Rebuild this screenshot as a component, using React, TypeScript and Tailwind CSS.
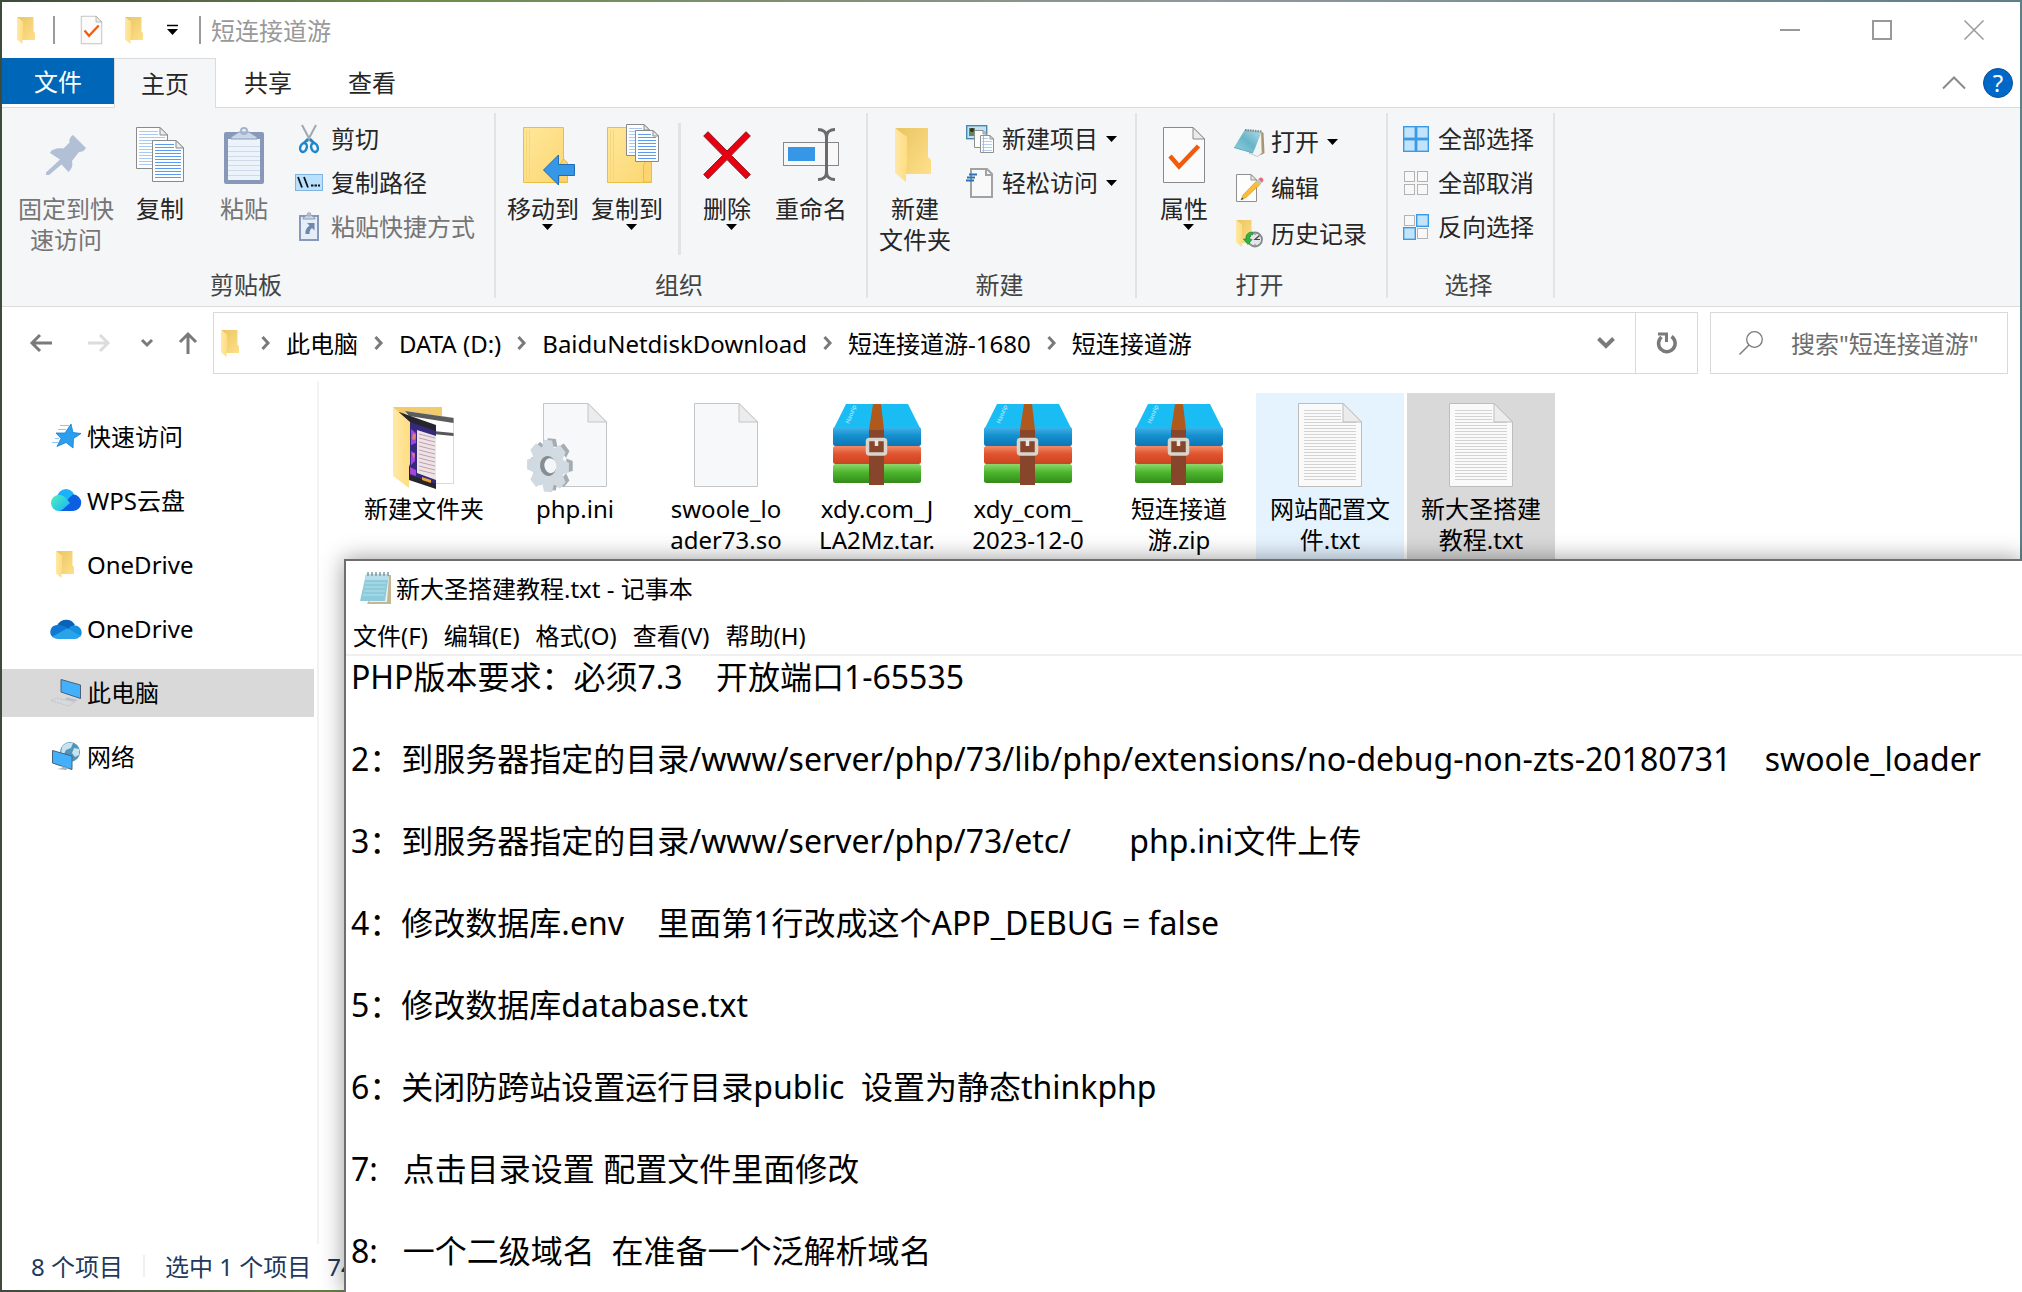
import type { ReactNode } from 'react'
import clsx from 'clsx'

/* ------------------------------------------------------------------ */
/* Small shared drawings                                               */
/* ------------------------------------------------------------------ */

interface SvgProps {
  w: number
  h: number
  vb?: string
  className?: string
  children: ReactNode
}

function Svg({ w, h, vb, className, children }: SvgProps) {
  return (
    <svg
      width={w}
      height={h}
      viewBox={vb ?? `0 0 ${w} ${h}`}
      fill="none"
      aria-hidden="true"
      className={clsx('shrink-0 overflow-visible', className)}
    >
      {children}
    </svg>
  )
}

interface PageProps {
  x?: number
  y?: number
  w: number
  h: number
  fold: number
  stroke?: string
  fill?: string
  line?: string
  step?: number
  inset?: number
  lineWidth?: number
}

// A sheet of paper with a folded top-right corner and optional ruled lines
function Page({
  x = 0,
  y = 0,
  w,
  h,
  fold,
  stroke = '#8a8a8a',
  fill = '#fdfdfd',
  line,
  step = 3,
  inset = 3,
  lineWidth = 1,
}: PageProps) {
  const rows: number[] = []
  if (line) {
    for (let r = inset + 1; r < h - inset; r += step) rows.push(r)
  }
  return (
    <g transform={`translate(${x} ${y})`}>
      <path
        d={`M.5 .5H${w - fold}L${w - 0.5} ${fold}V${h - 0.5}H.5Z`}
        fill={fill}
        stroke={stroke}
      />
      {rows.map((r) => (
        <path
          key={r}
          d={`M${inset} ${r + 0.5}H${r < fold ? w - fold - 2 : w - inset}`}
          stroke={line}
          strokeWidth={lineWidth}
        />
      ))}
      <path
        d={`M${w - fold} .5V${fold}H${w - 0.5}Z`}
        fill="#ececec"
        stroke={stroke}
      />
    </g>
  )
}

function FolderIcon({ w = 20, h = 27 }: { w?: number; h?: number }) {
  return (
    <Svg w={w} h={h} vb="0 0 20 27">
      <defs>
        <linearGradient id="folder-back" x1="0" y1="0" x2="1" y2="1">
          <stop offset="0" stopColor="#e9c562" />
          <stop offset="1" stopColor="#ffe08a" />
        </linearGradient>
        <linearGradient id="folder-leaf" x1="0" y1="0" x2="1" y2="0">
          <stop offset="0" stopColor="#ffe9a8" />
          <stop offset="1" stopColor="#ffdd80" />
        </linearGradient>
      </defs>
      <path d="M.5 0H16.5V14.5L18 16V23H4Z" fill="url(#folder-back)" />
      <path d="M0 0L6 4.500V19L5.500 20V27L0 22.500Z" fill="url(#folder-leaf)" />
    </Svg>
  )
}

function Caret({ className }: { className?: string }) {
  return (
    <Svg w={11} h={6} className={className}>
      <path d="M0 0H11L5.500 6Z" fill="#000" />
    </Svg>
  )
}

/* ------------------------------------------------------------------ */
/* Ribbon icons                                                        */
/* ------------------------------------------------------------------ */

function PinIcon() {
  return (
    <Svg w={40} h={40}>
      <path
        d="M0 37.500L14 24.500L4 18L5.500 15.500C10 13 14 13 17.500 13.500L23.500 7.500C23 4.500 24 2 27 0L40 13C38 16 36 17 33 17L26 26C27 30 26 34 22.500 37L15.500 29.500L3 40H0Z"
        fill="#b2c0d6"
      />
    </Svg>
  )
}

function CopyIcon() {
  return (
    <Svg w={48} h={56}>
      <Page w={32} h={42} fold={8} line="#a9c9f5" inset={3} />
      <Page x={16} y={13} w={32} h={42} fold={8} line="#5b9cf0" inset={3} />
    </Svg>
  )
}

function PasteIcon() {
  return (
    <Svg w={40} h={57}>
      <rect y="5" width="40" height="52" rx="2" fill="#8798b8" />
      <rect x="4" y="12" width="32" height="41" fill="#edf3fb" />
      {[19, 24, 29, 33, 38, 43, 48].map((y) => (
        <path key={y} d={`M4 ${y}.5H36`} stroke="#cfdae8" />
      ))}
      <path d="M7 10L15 5H25L33 10V12H7Z" fill="#c9d6e8" stroke="#8c9cba" />
      <circle cx="20" cy="4" r="3" stroke="#a4b3cc" strokeWidth="2" />
    </Svg>
  )
}

function ScissorsIcon() {
  return (
    <Svg w={20} h={28}>
      <path d="M3 0L12 17M17 0L8 17" stroke="#a3a8ad" strokeWidth="2" />
      <path d="M9 14L5 18M11 14L15 18" stroke="#1d86cc" strokeWidth="2.500" />
      <ellipse cx="4.500" cy="22.500" rx="3.200" ry="4.500" transform="rotate(20 4.500 22.500)" stroke="#1d86cc" strokeWidth="2.500" />
      <ellipse cx="15.500" cy="22.500" rx="3.200" ry="4.500" transform="rotate(-20 15.500 22.500)" stroke="#1d86cc" strokeWidth="2.500" />
    </Svg>
  )
}

function CopyPathIcon() {
  return (
    <Svg w={28} h={17}>
      <rect x=".5" y=".5" width="27" height="16" fill="#b9e0fc" stroke="#80b4de" />
      <path d="M3 3L7 13.500M9 3L13 13.500" stroke="#111" strokeWidth="1.800" />
      <path d="M16 11.500H18.500M19.500 11.500H22M23 11.500H25" stroke="#111" strokeWidth="2" />
    </Svg>
  )
}

function PasteShortcutIcon() {
  return (
    <Svg w={20} h={29}>
      <rect x="1" y="4" width="18" height="24" fill="#e4edf8" stroke="#8798b8" strokeWidth="2" />
      <path d="M4 6L8 3H12L16 6V7H4Z" fill="#c9d6e8" stroke="#8c9cba" />
      <circle cx="10" cy="2.500" r="1.500" stroke="#a4b3cc" strokeWidth="1.500" />
      <path d="M8 11H15.500V18.500L13 16C11 17.500 10.500 19 10.500 22H6.500C6 18.500 7.500 15.500 10.500 13.500Z" fill="#6f86ad" />
    </Svg>
  )
}

function YellowBook() {
  return (
    <>
      <defs>
        <linearGradient id="book" x1="0" y1="0" x2="1" y2="1">
          <stop offset="0" stopColor="#ffe79a" />
          <stop offset="1" stopColor="#fbd671" />
        </linearGradient>
      </defs>
      <path d="M.5 .5H40.500V32L44.500 36V55.500H.5Z" fill="url(#book)" stroke="#e8bf45" />
      <path d="M3.500 3V53M6.500 3V53" stroke="#f5d778" />
      <path d="M36.500 55V38L40.500 32L44.500 36V55Z" fill="#fdd470" stroke="#e8bf45" />
    </>
  )
}

function MoveToIcon() {
  return (
    <Svg w={40} h={56}>
      <YellowBook />
      <path d="M20.500 43L35.500 28V37.500H51.500V48.500H35.500V58Z" fill="#3697e6" stroke="#1c6cb8" />
    </Svg>
  )
}

function CopyToIcon() {
  return (
    <Svg w={40} h={56}>
      <YellowBook />
      <Page x={19} y={-3} w={24} h={32} fold={6} line="#a9c9f5" />
      <Page x={28} y={3} w={24} h={32} fold={6} line="#5b9cf0" />
    </Svg>
  )
}

function DeleteIcon() {
  return (
    <Svg w={48} h={48}>
      <path
        d="M5 .7L24 20L43 .7L47.300 5L28.300 24.300L47.300 43.500L43 47.800L24 28.600L5 47.800L.7 43.500L19.700 24.300L.7 5Z"
        fill="#e60012"
        stroke="#93151c"
      />
    </Svg>
  )
}

function RenameIcon() {
  return (
    <Svg w={56} h={54}>
      <rect x=".5" y="14.500" width="55" height="23" fill="#f8f8f9" stroke="#868686" />
      <rect x="5" y="19" width="27" height="14" fill="#3697e6" />
      <path
        d="M35 1.500C40 1.500 43.500 4 43.500 9C43.500 4 47 1.500 52 1.500M43.500 7V46M35 51.500C40 51.500 43.500 49 43.500 44C43.500 49 47 51.500 52 51.500"
        stroke="#6b6b6b"
        strokeWidth="3"
      />
    </Svg>
  )
}

function NewItemIcon() {
  return (
    <Svg w={28} h={28}>
      <rect x=".7" y=".7" width="20" height="13" fill="#bfe3f7" stroke="#4a88b0" strokeWidth="1.400" />
      <rect x="3" y="3" width="6" height="8" fill="#5e8a5c" />
      <circle cx="6" cy="5" r="2" fill="#3a2a22" />
      <Page x={8} y={5} w={13} h={18} fold={4} stroke="#909090" />
      <Page x={14} y={10} w={14} h={18} fold={4} stroke="#909090" line="#b4cdea" inset={2} />
      <path d="M17.500 11V27" stroke="#f2a0a0" />
    </Svg>
  )
}

function EasyAccessIcon() {
  return (
    <Svg w={28} h={30}>
      <path d="M5 1H21L26 6V29H5Z" fill="#f9f9f9" stroke="#a2a2a2" strokeWidth="2" />
      <path d="M20 1V7H26" stroke="#a2a2a2" strokeWidth="2" />
      <path d="M3 6.500H11M1 9.500H9M0 12.500H8" stroke="#2a72b5" strokeWidth="2" />
    </Svg>
  )
}

function PropertiesIcon({ w = 42, h = 56 }: { w?: number; h?: number }) {
  return (
    <Svg w={w} h={h} vb="0 0 42 56">
      <Page w={42} h={56} fold={12} fill="#fbfbfb" />
      <path d="M7 29L16 39.500L35.500 19" stroke="#f25b0c" strokeWidth="4.500" />
    </Svg>
  )
}

function OpenIcon() {
  return (
    <Svg w={30} h={28}>
      <defs>
        <linearGradient id="pad" x1="1" y1="0" x2="0" y2="1">
          <stop offset="0" stopColor="#b4dfe8" />
          <stop offset=".5" stopColor="#69b4c8" />
          <stop offset="1" stopColor="#8fd3e0" />
        </linearGradient>
      </defs>
      <path d="M27 3L29.500 5L30.500 25L27 27L24 26Z" fill="#a8946a" />
      <path d="M27 2.500L28 25L23.500 28.500L15 25L20 22Z" fill="#f2f4f4" stroke="#a9b4b8" strokeWidth=".7" />
      <path d="M11 1.500L27.500 3.500L19 25L0 19.500Z" fill="url(#pad)" />
      <path d="M11 2L27 3.500" stroke="#7d8a8e" strokeWidth="2.200" strokeDasharray="1.500 1" />
      <path d="M0 19.500L19 25" stroke="#4d9fb5" strokeWidth=".8" />
    </Svg>
  )
}

function EditIcon() {
  return (
    <Svg w={28} h={28}>
      <Page x={1} w={21} h={28} fold={6} stroke="#8f8f8f" />
      <path d="M6 26L8 21L22 6.500L25.500 10L11 23.500Z" fill="#fbbd36" stroke="#d99a22" strokeWidth=".7" />
      <path d="M21 7.500L23.500 5L27 8.500L24.500 11Z" fill="#b9c4cc" />
      <path d="M23.500 5L25.500 3.500C27.500 3.500 29 5.500 28 7.500L27 8.500Z" fill="#e8667a" />
      <path d="M6 26L7 23.500L8.500 25Z" fill="#444" />
    </Svg>
  )
}

function HistoryIcon() {
  return (
    <Svg w={28} h={28}>
      <path d="M1.500 0H16.500V14.500L18 16V23H5Z" fill="url(#folder-back)" />
      <path d="M1 0L7 4.500V27L1 22.500Z" fill="url(#folder-leaf)" />
      <circle cx="20" cy="19.500" r="7" fill="#e3e6e8" stroke="#868a8d" strokeWidth="1.800" />
      <path d="M24.500 15.500L20 19.500H25" stroke="#444" strokeWidth="1.200" />
      <path d="M15.500 15V17M20 13.500V15M20 24V25.500" stroke="#777" />
      <path d="M17.500 12C13 12 10.500 15 11 19H8.500L13 24.500L17 19.500L14.500 19C14.500 16.500 15.500 15 18 14.500Z" fill="#2fb344" stroke="#1b8530" strokeWidth=".7" />
    </Svg>
  )
}

function GridIcon({ on }: { on: [boolean, boolean, boolean, boolean] }) {
  return (
    <Svg w={26} h={26}>
      {on.map((active, i) => {
        const x = (i % 2) * 13
        const y = Math.floor(i / 2) * 13
        return active ? (
          <rect key={i} x={x + 0.700} y={y + 0.700} width="11.600" height="11.600" fill="#c2e3fc" stroke="#3b9ae3" strokeWidth="1.400" />
        ) : (
          <rect key={i} x={x + 1.500} y={y + 1.500} width="10" height="10" fill="#f8f8f8" stroke="#b3b3b3" />
        )
      })}
    </Svg>
  )
}

/* ------------------------------------------------------------------ */
/* Sidebar icons                                                       */
/* ------------------------------------------------------------------ */

function QuickAccessIcon() {
  return (
    <Svg w={26} h={24}>
      <path d="M18 0L20 8.500L28 9.500L20.500 14.500L20 24L13 18.500L4 22.500L8 14.500L3 9H12Z" fill="#2b9fee" stroke="#1480cf" strokeWidth=".8" />
      <path d="M7 1.500H16M5 5.500H13M-1 18.500H6M2 14.500H6" stroke="#8cc8f2" />
    </Svg>
  )
}

function WpsCloudIcon() {
  return (
    <Svg w={30} h={22}>
      <defs>
        <linearGradient id="wps-left" x1="0" y1="0" x2="1" y2="1">
          <stop offset="0" stopColor="#4df0c2" />
          <stop offset="1" stopColor="#17b3f5" />
        </linearGradient>
      </defs>
      <circle cx="15" cy="9" r="9" fill="#1cb2fb" />
      <path d="M22 5.500A8 8 0 0 1 22 22H8L18 9Z" fill="#0b5fe0" />
      <path d="M8 6C12 6 14 8 19 14L11 21Q9 22 8 22A8 8 0 0 1 8 6Z" fill="url(#wps-left)" />
    </Svg>
  )
}

function OneDriveIcon() {
  return (
    <Svg w={32} h={21}>
      <path d="M7 8A10 10 0 0 1 25 7L17 13Z" fill="#0a62b8" />
      <path d="M7 7C12 6 15 9 19 11L3 19.500A7 7 0 0 1 7 7Z" fill="#0f78d4" />
      <path d="M18 11C20 8 23 7 25 7.500A7 7 0 0 1 30 19Z" fill="#1590df" />
      <path d="M2.500 18.500L17 10.500L30.500 17.500C29 20 27 21 25 21H8C5 21 3.500 20 2.500 18.500Z" fill="#29a4ea" />
    </Svg>
  )
}

function Monitor() {
  return <path d="M.5 .5L20 6V19.500L.5 13Z" fill="#42b0fb" stroke="#47627a" />
}

function ThisPcIcon() {
  return (
    <Svg w={30} h={27}>
      <g transform="translate(9.500 0)">
        <Monitor />
      </g>
      <path d="M16 18.500L27 21L24 22.500L14 20.500Z" fill="#b8c2cb" />
      <path d="M6 19L24 23L17 27L0 21.500Z" fill="#d6dadd" stroke="#b4b9be" strokeWidth=".7" strokeDasharray="2 1" />
    </Svg>
  )
}

function NetworkIcon() {
  return (
    <Svg w={28} h={28}>
      <circle cx="18" cy="10" r="10" fill="#4f94ba" />
      <path d="M10 5C12 1 18 0 21 1L19 6L14 8L12 12L9 11ZM22 6L27 7L27 13L23 15L20 11Z" fill="#c9e2ee" />
      <g transform="translate(0 8)">
        <Monitor />
      </g>
      <path d="M10 24V26L5 27L14 28L17 26L14 25.500" fill="#a9b5bf" />
    </Svg>
  )
}

/* ------------------------------------------------------------------ */
/* File icons                                                          */
/* ------------------------------------------------------------------ */

function FolderWithPictures() {
  return (
    <Svg w={62} h={84}>
      <path d="M0 4H49V30H5Z" fill="#f2cb6a" />
      <path d="M12 8L60.500 15V80.500H40Z" fill="#fff" stroke="#c9c9c9" strokeWidth=".7" />
      <path d="M12 8L60.500 15V20L16 13Z" fill="#5c5c5c" />
      <path d="M40 28L60.500 30V33L40 31Z" fill="#565656" />
      <path d="M6 9L43 22V86L16 77Z" fill="#25252b" />
      <path d="M17 19L43 28V81L17 72Z" fill="#35297d" />
      <path d="M18 26L23 30V40L18 42ZM18 48L22 50V58L18 62ZM17 64L23 67V73L17 71Z" fill="#a544dc" />
      <path d="M20 30L23 32L22 37L19 36ZM19 50L22 51L21 56Z" fill="#d9876d" />
      <path d="M24 27L43 33V77L24 70Z" fill="#ece4e6" />
      {[31, 35, 39, 43, 47, 51, 55, 59, 63, 67].map((y) => (
        <path key={y} d={`M26 ${y}L42 ${y + 4}`} stroke="#b07f90" strokeWidth=".7" />
      ))}
      <path d="M29 74L38 77V80L29 77Z" fill="#e9a23b" />
      <path d="M0 4L17 19V61L16 64V85L0 73Z" fill="url(#folder-leaf)" />
    </Svg>
  )
}

function BlankFile() {
  return (
    <Svg w={64} h={84}>
      <Page w={64} h={84} fold={19} fill="#f7f8f9" stroke="#c4c5c7" />
    </Svg>
  )
}

function TextFile() {
  return (
    <Svg w={64} h={84}>
      <Page w={64} h={84} fold={19} fill="#fafafa" stroke="#bdbdbd" line="#d3d3d3" step={3} inset={6} />
    </Svg>
  )
}

const GEAR_TEETH = [0, 45, 90, 135, 180, 225, 270, 315]

function IniFile() {
  return (
    <Svg w={64} h={84}>
      <Page w={64} h={84} fold={19} fill="#f7f8f9" stroke="#c4c5c7" />
      <g transform="translate(5 63) rotate(-8) scale(.8 1)">
        <g transform="translate(5 -1)">
          {GEAR_TEETH.map((a) => (
            <path key={a} d="M-7 -18L-5 -26H5L7 -18Z" transform={`rotate(${a + 10})`} fill="#a5adb3" />
          ))}
        </g>
        {GEAR_TEETH.map((a) => (
          <path key={a} d="M-7.500 -17L-5 -26H5L7.500 -17Z" transform={`rotate(${a + 10})`} fill="#d2dae1" />
        ))}
        <circle r="20" fill="#d2dae1" />
        <circle r="10" fill="#858d94" />
        <circle cx="3" r="7.500" fill="#f3f5f6" />
      </g>
    </Svg>
  )
}

function ZipFile() {
  return (
    <Svg w={88} h={82}>
      <defs>
        <linearGradient id="zip-blue" x1="0" y1="0" x2="0" y2="1">
          <stop offset="0" stopColor="#41b3ea" />
          <stop offset=".45" stopColor="#1590cf" />
          <stop offset="1" stopColor="#0d76b4" />
        </linearGradient>
        <linearGradient id="zip-red" x1="0" y1="0" x2="0" y2="1">
          <stop offset="0" stopColor="#f08a68" />
          <stop offset=".45" stopColor="#e2532f" />
          <stop offset="1" stopColor="#c94522" />
        </linearGradient>
        <linearGradient id="zip-green" x1="0" y1="0" x2="0" y2="1">
          <stop offset="0" stopColor="#8fd76c" />
          <stop offset=".45" stopColor="#4bb52c" />
          <stop offset="1" stopColor="#348a1b" />
        </linearGradient>
      </defs>
      <path d="M13 0H75L87 24H1Z" fill="#19bdf4" />
      <rect y="23" width="88" height="19" rx="2.500" fill="url(#zip-blue)" />
      <rect y="42" width="88" height="18" rx="2.500" fill="url(#zip-red)" />
      <rect y="60" width="88" height="19" rx="2.500" fill="url(#zip-green)" />
      <path d="M40 0H48L51 26H36Z" fill="#b0591c" />
      <path d="M36 26H51V81H36Z" fill="#87452c" />
      <rect x="34.500" y="35.500" width="18" height="14.500" rx="2" stroke="#d9d5cd" strokeWidth="3.500" />
      <path d="M43.500 36V42" stroke="#e8e5df" strokeWidth="3.500" />
      <text x="16" y="20" fontSize="6" fill="#c9f0fd" transform="rotate(-68 16 20)">
        Haozip
      </text>
    </Svg>
  )
}

function NotepadIcon() {
  return (
    <Svg w={32} h={32}>
      <path d="M24 3H31V32H7L9 28Z" fill="#c3b693" />
      <path d="M22 4L29 5L27 30L9 30Z" fill="#f0efe6" />
      <path d="M6 2H29L25 29H0Z" fill="#8dcbdc" />
      <path d="M6 2H29L28 8H5Z" fill="#b5e0ea" />
      <path d="M5 11H26M4.500 15H25.500M4 19H25M3 23H24" stroke="#b2dfe9" />
      <path d="M8 0V4M12 0V4M16 0V4M20 0V4M24 0V4M28 0V4" stroke="#8a9598" strokeWidth="1.500" />
    </Svg>
  )
}

/* ------------------------------------------------------------------ */
/* Ribbon pieces                                                       */
/* ------------------------------------------------------------------ */

interface BigButtonProps {
  icon: ReactNode
  lines: string[]
  caret?: boolean
  disabled?: boolean
  className?: string
}

function BigButton({ icon, lines, caret, disabled, className }: BigButtonProps) {
  return (
    <button
      type="button"
      disabled={disabled}
      className={clsx(
        'relative flex shrink-0 flex-col items-center leading-[31px]',
        disabled ? 'text-[#757575]' : 'text-[#262626]',
        className ?? 'w-[84px]'
      )}
    >
      <span className="mb-[6px] flex h-16 items-center justify-center">{icon}</span>
      {lines.map((line) => (
        <span key={line} className="whitespace-nowrap">
          {line}
        </span>
      ))}
      {caret && <Caret className="absolute top-[101px] left-[41px]" />}
    </button>
  )
}

interface SmallButtonProps {
  icon: ReactNode
  label: string
  caret?: boolean
  disabled?: boolean
}

function SmallButton({ icon, label, caret, disabled }: SmallButtonProps) {
  return (
    <button
      type="button"
      disabled={disabled}
      className={clsx(
        'flex items-center gap-2 leading-[31px] whitespace-nowrap',
        disabled ? 'text-[#757575]' : 'text-[#262626]'
      )}
    >
      <span className="flex h-[30px] w-7 items-center justify-center">{icon}</span>
      {label}
      {caret && <Caret />}
    </button>
  )
}

function RibbonGroup({ label, className, children }: { label: string; className: string; children: ReactNode }) {
  return (
    <section
      aria-label={label}
      className="mt-[5px] mb-2 flex shrink-0 flex-col border-r-2 border-[#e1e3e5]"
    >
      <div className={clsx('flex flex-1 items-start pt-[10px]', className)}>{children}</div>
      <div className="pr-1 text-center leading-[26px] text-[#444]">{label}</div>
    </section>
  )
}

function Ribbon() {
  return (
    <div className="flex h-[199px] shrink-0 overflow-hidden border-b border-[#d9dbdd] bg-[#f5f6f8]">
      <RibbonGroup label="剪贴板" className="pr-[19px] pl-4">
        <BigButton icon={<PinIcon />} lines={['固定到快', '速访问']} disabled className="w-24" />
        <BigButton icon={<CopyIcon />} lines={['复制']} className="ml-1 w-[84px]" />
        <BigButton icon={<PasteIcon />} lines={['粘贴']} disabled />
        <div className="ml-[9px] flex flex-col gap-[13px]">
          <SmallButton icon={<ScissorsIcon />} label="剪切" />
          <SmallButton icon={<CopyPathIcon />} label="复制路径" />
          <SmallButton icon={<PasteShortcutIcon />} label="粘贴快捷方式" disabled />
        </div>
      </RibbonGroup>

      <RibbonGroup label="组织" className="pr-[13px] pl-[5px]">
        <BigButton icon={<MoveToIcon />} lines={['移动到']} caret />
        <BigButton icon={<CopyToIcon />} lines={['复制到']} caret />
        <div className="mr-1 ml-[9px] h-[132px] w-[3px] bg-[#e1e3e5]" />
        <BigButton icon={<DeleteIcon />} lines={['删除']} caret />
        <BigButton icon={<RenameIcon />} lines={['重命名']} />
      </RibbonGroup>

      <RibbonGroup label="新建" className="pr-[18px] pl-[5px]">
        <BigButton icon={<FolderIcon w={40} h={54} />} lines={['新建', '文件夹']} />
        <div className="ml-[9px] flex flex-col gap-[13px]">
          <SmallButton icon={<NewItemIcon />} label="新建项目" caret />
          <SmallButton icon={<EasyAccessIcon />} label="轻松访问" caret />
        </div>
      </RibbonGroup>

      <RibbonGroup label="打开" className="pr-[19px] pl-[5px]">
        <BigButton icon={<PropertiesIcon />} lines={['属性']} caret />
        <div className="mt-[3px] ml-[9px] flex flex-col gap-[15px]">
          <SmallButton icon={<OpenIcon />} label="打开" caret />
          <SmallButton icon={<EditIcon />} label="编辑" />
          <SmallButton icon={<HistoryIcon />} label="历史记录" />
        </div>
      </RibbonGroup>

      <RibbonGroup label="选择" className="pr-[19px] pl-[14px]">
        <div className="flex flex-col gap-[13px]">
          <SmallButton icon={<GridIcon on={[true, true, true, true]} />} label="全部选择" />
          <SmallButton icon={<GridIcon on={[false, false, false, false]} />} label="全部取消" />
          <SmallButton icon={<GridIcon on={[false, true, true, false]} />} label="反向选择" />
        </div>
      </RibbonGroup>
    </div>
  )
}

/* ------------------------------------------------------------------ */
/* Explorer window                                                     */
/* ------------------------------------------------------------------ */

function TitleBar() {
  return (
    <header className="flex h-14 shrink-0 items-center pl-[15px]">
      <FolderIcon />
      <span className="ml-4 h-7 w-[2px] bg-[#9b9b9b]" />
      <button type="button" aria-label="属性" className="ml-[26px]">
        <PropertiesIcon w={21} h={28} />
      </button>
      <button type="button" aria-label="新建文件夹" className="ml-[23px]">
        <FolderIcon />
      </button>
      <button type="button" aria-label="自定义快速访问工具栏" className="ml-[22px]">
        <Svg w={11} h={10}>
          <path d="M0 .5H11" stroke="#000" strokeWidth="1.500" />
          <path d="M0 4H11L5.500 10Z" fill="#000" />
        </Svg>
      </button>
      <span className="mr-[10px] ml-[21px] h-7 w-[2px] bg-[#9b9b9b]" />
      <h1 className="text-[#999]">短连接道游</h1>
      <div className="ml-auto flex self-stretch">
        <button type="button" aria-label="最小化" className="flex w-[92px] items-center justify-center">
          <Svg w={20} h={20}>
            <path d="M0 10H20" stroke="#999" strokeWidth="2" />
          </Svg>
        </button>
        <button type="button" aria-label="最大化" className="flex w-[92px] items-center justify-center">
          <Svg w={20} h={20}>
            <rect x="1" y="1" width="18" height="18" stroke="#999" strokeWidth="2" />
          </Svg>
        </button>
        <button type="button" aria-label="关闭" className="flex w-[92px] items-center justify-center">
          <Svg w={20} h={20}>
            <path d="M.5 .5L19.500 19.500M19.500 .5L.5 19.500" stroke="#999" strokeWidth="1.500" />
          </Svg>
        </button>
      </div>
    </header>
  )
}

function TabStrip() {
  return (
    <nav className="flex h-[50px] shrink-0 border-b border-[#d9dbdd] text-[#262626]">
      <button type="button" className="h-[46px] w-28 bg-[#0067b8] text-white">
        文件
      </button>
      <button type="button" className="-mb-px w-[102px] border-x border-t border-[#d9dbdd] bg-[#f5f6f8]">
        主页
      </button>
      <button type="button" className="w-[104px]">
        共享
      </button>
      <button type="button" className="w-[104px]">
        查看
      </button>
      <div className="ml-auto flex items-center gap-[17px] pr-[7px]">
        <button type="button" aria-label="最小化功能区">
          <Svg w={24} h={13}>
            <path d="M1 12.500L12 1.500L23 12.500" stroke="#8a8a8a" strokeWidth="2" />
          </Svg>
        </button>
        <button
          type="button"
          aria-label="帮助"
          className="size-[30px] rounded-full border border-[#0a4f94] bg-[#0068c9] text-center leading-7 text-white"
        >
          ?
        </button>
      </div>
    </nav>
  )
}

function Chevron() {
  return (
    <Svg w={9} h={14} className="mx-4">
      <path d="M1.500 1L7 7L1.500 13" stroke="#7a7a7a" strokeWidth="3" />
    </Svg>
  )
}

const CRUMBS = ['此电脑', 'DATA (D:)', 'BaiduNetdiskDownload', '短连接道游-1680', '短连接道游']

function AddressRow() {
  return (
    <div className="flex h-[72px] shrink-0 items-start pt-[5px] pr-3">
      <div className="flex h-[62px] w-[211px] shrink-0 items-center pl-7">
        <button type="button" aria-label="后退">
          <Svg w={22} h={18}>
            <path d="M22 9H2M10 1L2 9L10 17" stroke="#7a7a7a" strokeWidth="3" />
          </Svg>
        </button>
        <button type="button" aria-label="前进" disabled className="ml-9">
          <Svg w={22} h={18}>
            <path d="M0 9H20M12 1L20 9L12 17" stroke="#dcdcdc" strokeWidth="3" />
          </Svg>
        </button>
        <button type="button" aria-label="最近浏览的位置" className="ml-[31px]">
          <Svg w={12} h={8}>
            <path d="M1 1L6 6L11 1" stroke="#7a7a7a" strokeWidth="3" />
          </Svg>
        </button>
        <button type="button" aria-label="上移" className="ml-[26px]">
          <Svg w={18} h={22}>
            <path d="M9 22V2M1 10L9 2L17 10" stroke="#7a7a7a" strokeWidth="3" />
          </Svg>
        </button>
      </div>

      <div className="flex h-[62px] min-w-0 flex-1 border border-[#d9d9d9]">
        <div className="flex min-w-0 flex-1 items-center overflow-hidden pl-[7px]">
          <span className="mr-1">
            <FolderIcon />
          </span>
          {CRUMBS.map((crumb) => (
            <span key={crumb} className="flex items-center whitespace-nowrap">
              <Chevron />
              <button type="button">{crumb}</button>
            </span>
          ))}
        </div>
        <button type="button" aria-label="上一个位置" className="px-5">
          <Svg w={18} h={12}>
            <path d="M1.500 1.500L9 9L16.500 1.500" stroke="#7a7a7a" strokeWidth="4" />
          </Svg>
        </button>
        <button type="button" aria-label="刷新" className="flex w-[62px] items-center justify-center border-l border-[#d9d9d9]">
          <Svg w={20} h={22}>
            <path d="M14.500 4.500A8.300 8.300 0 1 1 4.500 5" stroke="#7a7a7a" strokeWidth="3.500" />
            <path d="M1 2H9.500V10" stroke="#7a7a7a" strokeWidth="3" />
          </Svg>
        </button>
      </div>

      <label className="ml-3 flex h-[62px] w-[298px] shrink-0 items-center border border-[#d9d9d9] pl-7">
        <Svg w={24} h={24}>
          <circle cx="15.500" cy="8.500" r="7.800" stroke="#7a7a7a" strokeWidth="1.300" />
          <path d="M10 14L.5 23.500" stroke="#7a7a7a" strokeWidth="1.500" />
        </Svg>
        <input
          type="search"
          aria-label="搜索"
          placeholder={'搜索"短连接道游"'}
          className="ml-7 w-full min-w-0 outline-none placeholder:text-[#6d6d6d]"
        />
      </label>
    </div>
  )
}

const PLACES: { label: string; icon: ReactNode; selected?: boolean }[] = [
  { label: '快速访问', icon: <QuickAccessIcon /> },
  { label: 'WPS云盘', icon: <WpsCloudIcon /> },
  { label: 'OneDrive', icon: <FolderIcon /> },
  { label: 'OneDrive', icon: <OneDriveIcon /> },
  { label: '此电脑', icon: <ThisPcIcon />, selected: true },
  { label: '网络', icon: <NetworkIcon /> },
]

function Sidebar() {
  return (
    <aside className="mt-[2px] flex w-[317px] shrink-0 flex-col gap-4 border-r-2 border-[#f3f3f3] pt-8 pr-[3px]">
      {PLACES.map((place, i) => (
        <button
          key={i}
          type="button"
          className={clsx('flex h-12 items-center gap-[5px] pb-[2px] pl-12', place.selected && 'bg-[#d9d9d9]')}
        >
          <span className="flex w-8 justify-center">{place.icon}</span>
          {place.label}
        </button>
      ))}
    </aside>
  )
}

const FILES: { lines: string[]; icon: ReactNode; state?: 'hover' | 'selected' }[] = [
  { lines: ['新建文件夹'], icon: <FolderWithPictures /> },
  { lines: ['php.ini'], icon: <IniFile /> },
  { lines: ['swoole_lo', 'ader73.so'], icon: <BlankFile /> },
  { lines: ['xdy.com_J', 'LA2Mz.tar.'], icon: <ZipFile /> },
  { lines: ['xdy_com_', '2023-12-0'], icon: <ZipFile /> },
  { lines: ['短连接道', '游.zip'], icon: <ZipFile /> },
  { lines: ['网站配置文', '件.txt'], icon: <TextFile />, state: 'hover' },
  { lines: ['新大圣搭建', '教程.txt'], icon: <TextFile />, state: 'selected' },
]

function FileList() {
  return (
    <main className="flex min-w-0 flex-1 items-start gap-[3px] overflow-hidden pt-[14px] pl-[31px]">
      {FILES.map((file) => (
        <button
          key={file.lines.join('')}
          type="button"
          className={clsx(
            'flex h-[180px] w-[148px] shrink-0 flex-col items-center pt-[10px] leading-[31px]',
            file.state === 'hover' && 'bg-[#e5f3ff]',
            file.state === 'selected' && 'bg-[#d9d9d9]'
          )}
        >
          <span className="mb-[6px] flex h-[84px] items-center">{file.icon}</span>
          {file.lines.map((line) => (
            <span key={line} className="whitespace-nowrap">
              {line}
            </span>
          ))}
        </button>
      ))}
    </main>
  )
}

function StatusBar() {
  return (
    <footer className="flex h-[46px] shrink-0 items-center pb-[2px] pl-[29px] whitespace-nowrap text-[#1e395b]">
      <span>8 个项目</span>
      <span className="mx-5 h-[22px] w-[2px] bg-[#f0f0f0]" />
      <span>选中 1 个项目</span>
      <span className="ml-4">74</span>
    </footer>
  )
}

/* ------------------------------------------------------------------ */
/* Notepad window                                                      */
/* ------------------------------------------------------------------ */

const MENUS = ['文件(F)', '编辑(E)', '格式(O)', '查看(V)', '帮助(H)']

const NOTE = [
  'PHP版本要求：必须7.3    开放端口1-65535',
  '2：到服务器指定的目录/www/server/php/73/lib/php/extensions/no-debug-non-zts-20180731    swoole_loader',
  '3：到服务器指定的目录/www/server/php/73/etc/       php.ini文件上传',
  '4：修改数据库.env    里面第1行改成这个APP_DEBUG = false',
  '5：修改数据库database.txt',
  '6：关闭防跨站设置运行目录public  设置为静态thinkphp',
  '7:   点击目录设置 配置文件里面修改',
  '8:   一个二级域名  在准备一个泛解析域名',
].join('\n\n')

function Notepad() {
  return (
    <div className="absolute top-[559px] right-0 bottom-0 left-[344px] flex flex-col border-t-2 border-l-2 border-[#6e6e6e] bg-white shadow-[0_0_22px_rgba(0,0,0,0.4)]">
      <div className="flex h-[54px] shrink-0 items-center gap-1 pl-[14px]">
        <NotepadIcon />
        <h2>新大圣搭建教程.txt - 记事本</h2>
      </div>
      <div className="flex h-[41px] shrink-0 gap-4 border-b-2 border-[#f0f0f0] pt-[3px] pl-[7px] leading-9">
        {MENUS.map((menu) => (
          <button key={menu} type="button">
            {menu}
          </button>
        ))}
      </div>
      <textarea
        aria-label="文本编辑器"
        wrap="off"
        spellCheck={false}
        defaultValue={NOTE}
        className="min-h-0 flex-1 resize-none overflow-hidden pl-[5px] text-[32px] leading-[41px] outline-none"
      />
    </div>
  )
}

export default function App() {
  return (
    <div className="relative h-screen overflow-hidden bg-[linear-gradient(90deg,#3d4a3c,#6d8a4a_20%,#8f999f_60%,#5d7f88)] p-[2px] font-['Noto_Sans','Noto_Sans_CJK_SC',sans-serif] text-[24px] leading-[31px] text-black">
      <div className="flex h-full flex-col bg-white">
        <TitleBar />
        <TabStrip />
        <Ribbon />
        <AddressRow />
        <div className="flex min-h-0 flex-1">
          <Sidebar />
          <FileList />
        </div>
        <StatusBar />
      </div>
      <Notepad />
    </div>
  )
}
